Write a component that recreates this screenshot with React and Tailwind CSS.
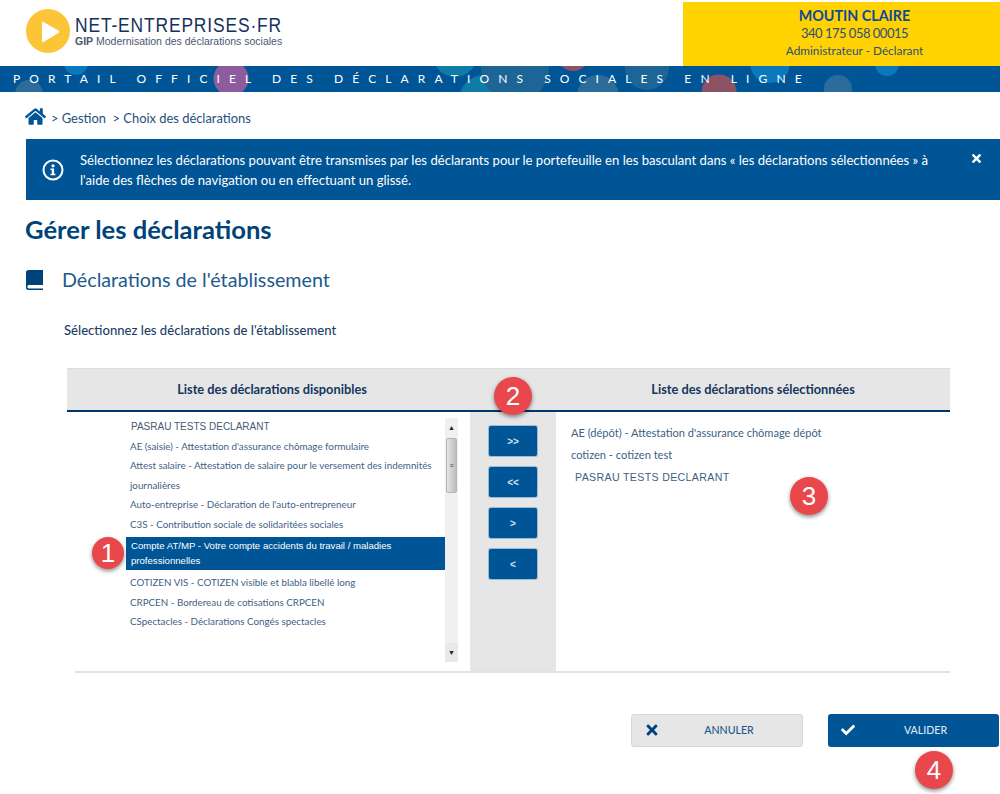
import { FaHome, FaCheck, FaTimes } from "react-icons/fa";

const availableItems = [
  { label: "AE (saisie) - Attestation d'assurance chômage formulaire" },
  { label: "Attest salaire - Attestation de salaire pour le versement des indemnités journalières" },
  { label: "Auto-entreprise - Déclaration de l'auto-entrepreneur" },
  { label: "C3S - Contribution sociale de solidaritées sociales" },
  { label: "Compte AT/MP - Votre compte accidents du travail / maladies professionnelles", selected: true },
  { label: "COTIZEN VIS - COTIZEN visible et blabla libellé long" },
  { label: "CRPCEN - Bordereau de cotisations CRPCEN" },
  { label: "CSpectacles - Déclarations Congés spectacles" },
];

const bubbles = [
  { cx: 76, cy: -3, r: 12, fill: "#0a78bd" },
  { cx: 29, cy: 28, r: 14, fill: "#2c6c9b" },
  { cx: 231, cy: 12.5, r: 17.5, fill: "#8d5c9f" },
  { cx: 455, cy: -11, r: 22, fill: "#0f7ca8" },
  { cx: 484, cy: 34, r: 25, fill: "#0f7ca8" },
  { cx: 515, cy: 2, r: 34, fill: "#1d6596" },
  { cx: 573, cy: -11, r: 16, fill: "#8c5266" },
  { cx: 598, cy: 30, r: 21, fill: "#2c6c9b" },
  { cx: 647, cy: 2, r: 22, fill: "#1d6596" },
  { cx: 770, cy: -3, r: 20, fill: "#0a78bd" },
  { cx: 719, cy: 26, r: 17.5, fill: "#8c5266" },
  { cx: 838, cy: 23, r: 14, fill: "#2c6c9b" },
  { cx: 887, cy: -2, r: 12, fill: "#0a78bd" },
];

function Logo() {
  return (
    <div className="flex items-center">
      <svg width="44" height="44" viewBox="0 0 44 44" className="shrink-0">
        <circle cx="22" cy="22" r="22" fill="#fcc537" />
        <path d="M16.5 13 L32.5 22 Q33 23 32.5 23.5 L16.5 33 Z" fill="#fff" stroke="#fff" strokeLinejoin="round" />
      </svg>
      <div className="ml-[5px] w-[208px] font-['Liberation_Sans',sans-serif]">
        <div className="text-[20.5px] leading-[20px] tracking-[1px] text-[#15305c] whitespace-nowrap scale-x-[0.85] origin-left">NET-ENTREPRISES·FR</div>
        <div className="text-[10.5px] leading-[11px] mt-[1px] text-[#4a5872] whitespace-nowrap origin-left">
          <span className="font-bold">GIP</span> Modernisation des déclarations sociales
        </div>
      </div>
    </div>
  );
}

function ArrowButton({ children }) {
  return (
    <button className="w-[50px] h-[32px] rounded-[3px] bg-[#005596] border border-white/60 text-[#d5e2ee] text-[10px] font-['Liberation_Sans',sans-serif] font-bold flex items-center justify-center">
      {children}
    </button>
  );
}

function Badge({ n, className }) {
  return (
    <div className={"absolute rounded-full bg-[#e8474c] text-white text-[26px] leading-none flex items-center justify-center shadow-[0_2px_4px_rgba(0,0,0,0.45)] font-['Liberation_Sans',sans-serif] " + className}>
      {n}
    </div>
  );
}

export default function App() {
  return (
    <div className="relative w-[1000px] h-[794px] overflow-hidden bg-white text-[#00437a] font-['Lato',sans-serif]">
      <header className="flex justify-between h-[66px] pt-[2px]">
        <div className="pl-[26px] pt-[7px]">
          <Logo />
        </div>
        <div className="w-[317px] h-[64px] bg-[#ffd200] flex flex-col items-center pt-[5px] pl-[26px]">
          <div className="text-[14.3px] leading-[18px] font-bold text-[#0d4a9a]">MOUTIN CLAIRE</div>
          <div className="text-[13px] leading-[16px] tracking-[-0.5px] text-[#2f4f7a]">340 175 058 00015</div>
          <div className="text-[11.8px] leading-[16px] mt-[2px] text-[#2f4f7a]">Administrateur - Déclarant</div>
        </div>
      </header>

      <div className="relative h-[26px] bg-[#005596] overflow-hidden">
        <svg width="1000" height="26" className="absolute inset-0">
          {bubbles.map((b, i) => (
            <circle key={i} cx={b.cx} cy={b.cy} r={b.r} fill={b.fill} />
          ))}
        </svg>
        <div className="relative pl-[13px] text-white text-[12px] leading-[26px] tracking-[9.1px] whitespace-nowrap">
          PORTAIL OFFICIEL DES DÉCLARATIONS SOCIALES EN LIGNE
        </div>
      </div>

      <nav className="flex items-center h-[47px] pl-[25px] pt-[7px] text-[12.9px] text-[#1d4f7c]">
        <FaHome size={21} className="text-[#005596] -mt-[5px]" />
        <span className="ml-[5px]">&gt; Gestion &nbsp;&gt; Choix des déclarations</span>
      </nav>

      <section className="relative ml-[26px] h-[61px] bg-[#005596] text-white flex items-center pl-[16px] pr-[60px]">
        <svg width="22" height="22" viewBox="0 0 22 22" className="shrink-0">
          <circle cx="11" cy="11" r="9.5" fill="none" stroke="#fff" strokeWidth="2" />
          <circle cx="11" cy="6.8" r="1.6" fill="#fff" />
          <path d="M8.5 9.5h3.6v5.2h1.3v1.6H8.5v-1.6h1.3v-3.6H8.5z" fill="#fff" />
        </svg>
        <p className="ml-[16px] text-[13.1px] leading-[20px]">
          Sélectionnez les déclarations pouvant être transmises par les déclarants pour le portefeuille en les basculant dans « les déclarations sélectionnées » à l'aide des flèches de navigation ou en effectuant un glissé.
        </p>
        <FaTimes size={13} className="absolute right-[17px] top-[13px] text-white" />
      </section>

      <h1 className="ml-[25px] mt-[13px] text-[25.6px] leading-[32px] font-bold text-[#00437a]">Gérer les déclarations</h1>

      <div className="flex items-center ml-[26px] mt-[21px] h-[28px]">
        <svg width="18" height="20" viewBox="0 0 18 20" className="shrink-0">
          <path d="M2.5 0H17v15H3a1.2 1.2 0 0 0 0 3.4h14V20H2.5A2.5 2.5 0 0 1 0 17.5v-15A2.5 2.5 0 0 1 2.5 0z" fill="#00437a" />
        </svg>
        <h2 className="ml-[18px] text-[19.7px] font-normal text-[#1d5a8c]">Déclarations de l'établissement</h2>
      </div>

      <p className="ml-[64px] mt-[28px] text-[13.1px] leading-[16px] font-medium text-[#1d3f66]">Sélectionnez les déclarations de l'établissement</p>

      <div className="ml-[67px] mt-[30px] w-[883px]">
        <div className="grid grid-cols-[403px_86px_394px] h-[44px] bg-[#e6e6e6] border-t border-[#dcdcdc] border-b-2 border-b-[#00376b] text-[12.8px] font-bold text-[#14365f]">
          <div className="flex items-center justify-center pl-[7px]">Liste des déclarations disponibles</div>
          <div />
          <div className="flex items-center justify-center">Liste des déclarations sélectionnées</div>
        </div>

        <div className="grid grid-cols-[403px_86px_394px] h-[259px]">
          <div className="flex pl-[59px] pt-[6px] pr-[12px]">
            <ul className="w-[319px] text-[9.8px] leading-[19.5px] text-[#3f5f86]">
              <li className="pl-[5px] text-[10px] leading-[18.5px] font-['Liberation_Sans',sans-serif] text-[#4a5a72]">PASRAU TESTS DECLARANT</li>
              {availableItems.map((item) => (
                <li
                  key={item.label}
                  className={
                    item.selected
                      ? "pl-[5px] pr-[24px] py-[2px] mt-[3px] mb-[3px] bg-[#005596] text-white text-[9.6px] leading-[14.5px] font-['Liberation_Sans',sans-serif]"
                      : "pl-[4px] pr-[4px]"
                  }
                >
                  {item.label}
                </li>
              ))}
            </ul>
            <div className="w-[13px] h-[244px] bg-[#f0f0f0] flex flex-col items-center">
              <div className="h-[20px] text-[7px] leading-[19px] text-[#222]">▲</div>
              <div className="w-[11px] h-[55px] rounded-[2px] bg-gradient-to-r from-[#e4e4e4] to-[#bdbdbd] border border-[#b5b5b5] flex items-center justify-center text-[7px] text-[#444]">≡</div>
              <div className="mt-auto h-[19px] w-full bg-[#e9e9e9] text-[7px] leading-[19px] text-center text-[#222]">▼</div>
            </div>
          </div>

          <div className="bg-[#e6e6e6] flex flex-col items-center gap-[9px] pt-[13px]">
            <ArrowButton>&gt;&gt;</ArrowButton>
            <ArrowButton>&lt;&lt;</ArrowButton>
            <ArrowButton>&gt;</ArrowButton>
            <ArrowButton>&lt;</ArrowButton>
          </div>

          <ul className="pl-[15px] pt-[10px] text-[11.05px] leading-[22px] text-[#3b5f85]">
            <li>AE (dépôt) - Attestation d'assurance chômage dépôt</li>
            <li>cotizen - cotizen test</li>
            <li className="pl-[4px] text-[10.6px] tracking-[0.35px] font-['Liberation_Sans',sans-serif]">PASRAU TESTS DECLARANT</li>
          </ul>
        </div>

        <div className="ml-[8px] h-[2px] bg-[#e2e2e2]" />
      </div>

      <div className="flex justify-end gap-[25px] mt-[41px] pr-[1px]">
        <button className="relative w-[172px] h-[33px] rounded-[3px] bg-[#e6e6e6] border border-[#d8d8d8] text-[10.6px] font-medium text-[#1d5a8c] flex items-center justify-center pl-[24px]">
          <FaTimes size={16} className="absolute left-[12px] top-[7px] text-[#00437a]" />
          ANNULER
        </button>
        <button className="relative w-[171px] h-[33px] rounded-[3px] bg-[#005596] text-[10.6px] font-medium text-[#dbe7f2] flex items-center justify-center pl-[24px]">
          <FaCheck size={14} className="absolute left-[13px] top-[9px] text-white" />
          VALIDER
        </button>
      </div>

      <Badge n="1" className="left-[92px] top-[537px] w-[32px] h-[32px]" />
      <Badge n="2" className="left-[494px] top-[377px] w-[38px] h-[38px]" />
      <Badge n="3" className="left-[790px] top-[477px] w-[38px] h-[38px]" />
      <Badge n="4" className="left-[915px] top-[751px] w-[38px] h-[38px]" />
    </div>
  );
}
